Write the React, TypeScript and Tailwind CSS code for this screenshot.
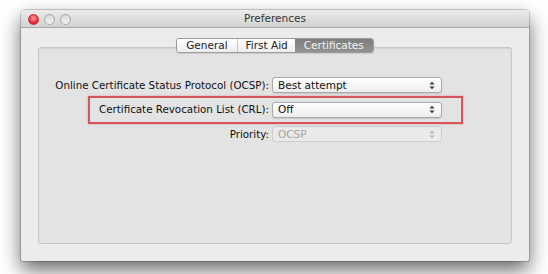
import React from "react";

const font = { fontFamily: '"DejaVu Sans", "Liberation Sans", sans-serif' };

function Arrows({ disabled }: { disabled?: boolean }) {
  const c = disabled ? "#b5b5b5" : "#333";
  return (
    <svg width="6" height="9" viewBox="0 0 6 9" className="shrink-0">
      <path d="M0.5 3.5 L3 0.8 L5.5 3.5 Z" fill={c} />
      <path d="M0.5 5.5 L3 8.2 L5.5 5.5 Z" fill={c} />
    </svg>
  );
}

function Popup({ value, disabled }: { value: string; disabled?: boolean }) {
  return (
    <div
      className={
        "h-[16px] w-[170px] flex items-center justify-between pl-[5px] pr-[6px] rounded-[3px] border " +
        (disabled
          ? "border-[#cdcdcd] bg-[#eaeaea] text-[#a3a3a3]"
          : "border-[#a9a9a9] bg-gradient-to-b from-white to-[#ededed] text-[#111] shadow-[0_1px_1px_rgba(0,0,0,0.12)]")
      }
    >
      <span className="text-[10.5px] leading-none">{value}</span>
      <Arrows disabled={disabled} />
    </div>
  );
}

function Label({ children }: { children: React.ReactNode }) {
  return (
    <div className="h-[16px] flex items-center justify-end text-[10.3px] text-[#111] leading-none whitespace-nowrap">
      {children}
    </div>
  );
}

export default function App() {
  return (
    <div className="w-[548px] h-[274px] bg-white pt-[10px] pl-[21px] overflow-hidden" style={font}>
      <div className="w-[508px] h-[251px] flex flex-col bg-[#ececec] rounded-t-[4px] rounded-b-[2px] shadow-[0_9px_20px_rgba(0,0,0,0.6),0_0_0_1px_rgba(0,0,0,0.18)]">
        {/* title bar */}
        <div className="h-[18px] relative flex items-center justify-center rounded-t-[4px] bg-gradient-to-b from-[#ebebeb] to-[#d2d2d2] border-b border-[#a9a9a9]">
          <div className="absolute left-[7px] top-[3.5px] flex gap-[5px]">
            <span className="w-[11px] h-[11px] rounded-full bg-[radial-gradient(circle_at_50%_35%,#ff9a9a,#e0202a_70%)] border border-[#b5333a]" />
            <span className="w-[11px] h-[11px] rounded-full bg-gradient-to-b from-[#d9d9d9] to-[#f1f1f1] border border-[#a8a8a8]" />
            <span className="w-[11px] h-[11px] rounded-full bg-gradient-to-b from-[#d9d9d9] to-[#f1f1f1] border border-[#a8a8a8]" />
          </div>
          <span className="text-[10.5px] text-[#333] leading-none">Preferences</span>
        </div>

        {/* content */}
        <div className="flex-1 flex flex-col pt-[10px] px-[17px] pb-[17px]">
          <div className="relative z-10 flex justify-center">
            <div className="flex h-[15px] rounded-[3px] border border-[#9c9c9c] overflow-hidden text-[10.5px] leading-none shadow-[0_1px_1px_rgba(0,0,0,0.1)]">
              <div className="flex items-center pl-[9px] pr-[9px] bg-gradient-to-b from-white to-[#ededed] text-[#222] border-r border-[#c4c4c4]">
                General
              </div>
              <div className="flex items-center pl-[8px] pr-[7px] bg-gradient-to-b from-white to-[#ededed] text-[#222]">
                First Aid
              </div>
              <div className="flex items-center px-[9px] bg-gradient-to-b from-[#7d7d7d] to-[#929292] text-[#f4f4f4]">
                Certificates
              </div>
            </div>
          </div>

          <div className="relative -mt-[6px] flex-1 bg-[#e3e3e3] border border-[#c6c6c6] rounded-[3px] shadow-[inset_0_1px_1px_rgba(0,0,0,0.08)]">
            <div className="pt-[29px] grid grid-cols-[230px_170px] gap-x-[3px] gap-y-[8.5px]">
              <Label>Online Certificate Status Protocol (OCSP):</Label>
              <Popup value="Best attempt" />
              <Label>Certificate Revocation List (CRL):</Label>
              <Popup value="Off" />
              <Label>Priority:</Label>
              <Popup value="OCSP" disabled />
            </div>

            {/* annotation */}
            <div className="absolute left-[49px] top-[48px] w-[375px] h-[28px] border-2 border-[#d5555b] shadow-[0_0_2px_rgba(213,85,91,0.5)]" />
          </div>
        </div>
      </div>
    </div>
  );
}
